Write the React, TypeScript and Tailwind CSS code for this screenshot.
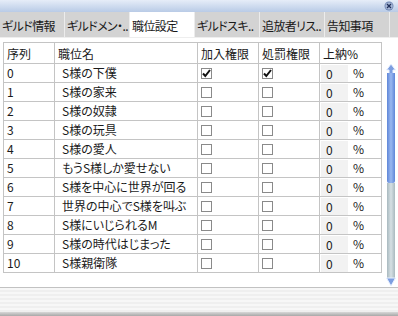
import React from 'react';

const tabs = ['ギルド情報', 'ギルドメン・..', '職位設定', 'ギルドスキ..', '追放者リス..', '告知事項'];

const ranks = [
  'S様の下僕',
  'S様の家来',
  'S様の奴隷',
  'S様の玩具',
  'S様の愛人',
  'もうS様しか愛せない',
  'S様を中心に世界が回る',
  '世界の中心でS様を叫ぶ',
  'S様にいじられるM',
  'S様の時代はじまった',
  'S様親衛隊',
];

function Box({ checked }: { checked?: boolean }) {
  return (
    <span className="relative block w-[11px] h-[11px] border border-[#8a8a8a] bg-white">
      {checked && (
        <svg viewBox="0 0 11 11" className="absolute -left-px -top-px w-[11px] h-[11px]">
          <path d="M2 5.5 L4.3 8 L9 2" fill="none" stroke="#111" strokeWidth="2" />
        </svg>
      )}
    </span>
  );
}

export default function App() {
  return (
    <div
      className="w-[398px] h-[316px] bg-white overflow-hidden flex flex-col text-[12px] text-[#1a1a1a] [font-feature-settings:'palt']"
      style={{ fontFamily: '"Noto Sans CJK JP", "Noto Sans", sans-serif' }}
    >
      {/* title bar */}
      <div className="h-[12px] bg-gradient-to-b from-[#e6edf8] to-[#b9cbe6] flex justify-end items-center pr-[4px]">
        <svg viewBox="0 0 10 10" className="w-[10px] h-[10px]">
          <circle cx="5" cy="5" r="4.5" fill="#6f86b4" />
          <circle cx="5" cy="5" r="3.6" fill="#a9b9d8" />
          <path d="M3 3 L7 7 M7 3 L3 7" stroke="#1f2f5a" strokeWidth="1.3" />
        </svg>
      </div>

      {/* tabs */}
      <div className="h-[26px] flex bg-[#d3d3d3] border-b border-[#eeeeee]">
        {tabs.map((t, i) => (
          <div
            key={t}
            className={`w-[65px] shrink-0 pl-[2px] pt-[2px] flex items-center border-r border-[#ececec] whitespace-nowrap overflow-hidden tracking-[-0.6px] ${
              i === 2 ? 'bg-white' : 'bg-[#d3d3d3]'
            }`}
          >
            {t}
          </div>
        ))}
      </div>

      {/* body */}
      <div className="flex pt-[4px] pl-[3px]">
        <table className="border-collapse table-fixed w-[378px] h-fit">
          <colgroup>
            <col className="w-[51px]" />
            <col className="w-[143px]" />
            <col className="w-[61px]" />
            <col className="w-[61px]" />
            <col className="w-[62px]" />
          </colgroup>
          <thead>
            <tr className="h-[21px]">
              <th className="border border-[#c4c4c4] font-normal text-left pl-[3px] pt-[2px]">序列</th>
              <th className="border border-[#c4c4c4] font-normal text-left pl-[3px] pt-[2px]">職位名</th>
              <th className="border border-[#c4c4c4] font-normal text-left pl-[3px] pt-[2px]">加入権限</th>
              <th className="border border-[#c4c4c4] font-normal text-left pl-[3px] pt-[2px]">処罰権限</th>
              <th className="border border-[#c4c4c4] font-normal text-left pl-[3px] pt-[2px]">上納%</th>
            </tr>
          </thead>
          <tbody>
            {ranks.map((name, i) => (
              <tr key={i} className="h-[19px]">
                <td className="border border-[#c4c4c4] pl-[3px] leading-none">{i}</td>
                <td className="border border-[#c4c4c4] pl-[7px] leading-none whitespace-nowrap">{name}</td>
                <td className="border border-[#c4c4c4] pl-[3px]">
                  <Box checked={i === 0} />
                </td>
                <td className="border border-[#c4c4c4] pl-[3px]">
                  <Box checked={i === 0} />
                </td>
                <td className="border border-[#c4c4c4] p-0">
                  <div className="flex items-center h-[17px]">
                    <span className="ml-[1px] w-[27px] h-full bg-[#f2f2f2] pl-[5px] leading-[17px]">0</span>
                    <span className="ml-[5px] leading-none">%</span>
                  </div>
                </td>
              </tr>
            ))}
          </tbody>
        </table>

        {/* scrollbar */}
        <div className="ml-[4px] mt-[21px] w-[10px] h-[224px] flex flex-col items-center">
          <svg viewBox="0 0 10 12" className="w-[10px] h-[12px] shrink-0">
            <path d="M5 1 L9.5 7 L7 7 L7 12 L3 12 L3 7 L0.5 7 Z" fill="#7d9ee0" stroke="#e8f0ff" strokeWidth="1" />
          </svg>
          <div className="w-[8px] h-[110px] bg-gradient-to-r from-[#5f86d8] via-[#9ab8f0] to-[#5f86d8] rounded-b-[2px] -mt-[2px]" />
          <div className="w-[8px] flex-1 bg-gradient-to-r from-[#a9b9bf] via-[#d6e0e4] to-[#a9b9bf]" />
          <svg viewBox="0 0 10 10" className="w-[10px] h-[10px] shrink-0 -mt-[1px]">
            <path d="M0.5 1 L9.5 1 L5 9 Z" fill="#7d9ee0" stroke="#e8f0ff" strokeWidth="1" />
          </svg>
        </div>
      </div>

      <div className="flex-1" />

      {/* bottom panel */}
      <div className="h-[25px] border-t border-[#c2c2c2] bg-[repeating-linear-gradient(to_bottom,#f7f7f7_0px,#f7f7f7_2px,#efefef_2px,#efefef_4px)]" />
      <div className="h-[4px] bg-gradient-to-b from-[#d8d8d8] to-[#a8a8a8]" />
    </div>
  );
}
